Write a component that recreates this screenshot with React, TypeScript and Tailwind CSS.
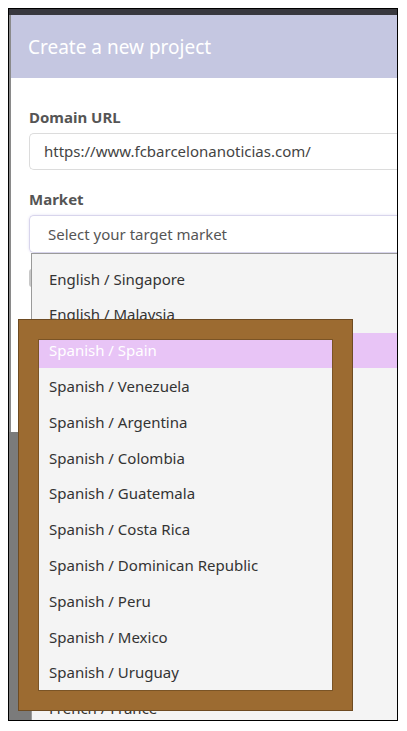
const markets = [
  "English / Singapore",
  "English / Malaysia",
  "Spanish / Spain",
  "Spanish / Venezuela",
  "Spanish / Argentina",
  "Spanish / Colombia",
  "Spanish / Guatemala",
  "Spanish / Costa Rica",
  "Spanish / Dominican Republic",
  "Spanish / Peru",
  "Spanish / Mexico",
  "Spanish / Uruguay",
  "French / France",
];

export default function App() {
  return (
    <div
      className="w-[407px] h-[731px] bg-white pt-[8px] pl-[8px]"
      style={{ fontFamily: "'Noto Sans', 'Open Sans', sans-serif" }}
    >
      {/* captured window */}
      <div className="relative w-[390px] h-[713px] border border-black bg-[#7b7b7b] overflow-hidden">
        <div className="h-[6px] bg-[#38383e]" />
        <div className="flex">
          <div className="w-[2px] bg-[#8a8a8a]" />
          {/* modal */}
          <div className="flex-1 bg-white h-[417px]">
            <div className="h-[63px] bg-[#c5c7e1] flex items-center pl-[17px] pt-[2px]">
              <h1 className="text-[19px] text-white font-normal">Create a new project</h1>
            </div>
            <div className="pl-[18px] pt-[29px]">
              <label className="block text-[15px] font-bold text-[#555] leading-[20px]">Domain URL</label>
              <div className="mt-[6px] h-[37px] border border-[#dcdcdc] border-r-0 rounded-l-[5px] flex items-center pl-[14px] text-[15px] text-[#444]">
                https://www.fcbarcelonanoticias.com/
              </div>
              <label className="block mt-[19px] text-[15px] font-bold text-[#555] leading-[20px]">Market</label>
              <div className="mt-[6px] h-[38px] border border-[#d8d5ec] border-r-0 rounded-l-[5px] flex items-center pl-[18px] text-[15px] text-[#555] shadow-[0_0_3px_#e2dff3]">
                Select your target market
              </div>
              <div className="mt-[16px] w-[4px] h-[18px] rounded-l-[3px] bg-[#c8c8c8]" />
            </div>
          </div>
        </div>

        {/* dropdown list */}
        <ul className="absolute left-[22px] top-[244px] right-0 bottom-0 bg-[#f4f4f4] border-t border-l border-[#9a9a9a] pt-[7px]">
          {markets.map((m) => (
            <li
              key={m}
              className={`h-[35.8px] flex items-center pl-[17px] text-[15px] ${
                m === "Spanish / Spain" ? "bg-[#e8c4f6] text-white" : "text-[#333]"
              }`}
            >
              {m}
            </li>
          ))}
        </ul>

        {/* annotation frame */}
        <div className="absolute left-[9px] top-[310px] w-[335px] h-[392px] border border-[#6e4b22]">
          <div className="w-full h-full border-[19px] border-[#9c6b31]">
            <div className="w-full h-full border border-[#7a5426]" />
          </div>
        </div>
      </div>
    </div>
  );
}
